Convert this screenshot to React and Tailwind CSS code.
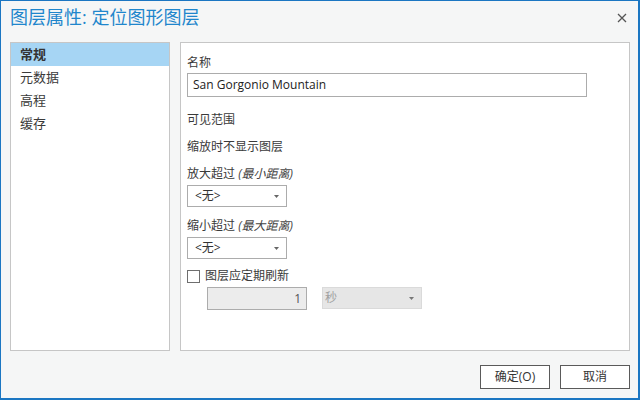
import { useState } from "react";

const font = { fontFamily: '"Open Sans", "Noto Sans CJK SC", sans-serif' };

const tabs = ["常规", "元数据", "高程", "缓存"];

function Caret({ className }) {
    return (
        <svg width="5" height="3" viewBox="0 0 5 3" className={className}>
            <path d="M0 0h5L2.5 3z" fill="currentColor" />
        </svg>
    );
}

function Dropdown({ value }) {
    return (
        <div className="w-[100px] h-[22px] border border-[#acacac] bg-white flex items-center justify-between pl-[7px] pr-[7px] text-[#333]">
            <span className="leading-none">{value}</span>
            <Caret className="text-[#666]" />
        </div>
    );
}

export default function App() {
    const [active] = useState(0);

    return (
        <div
            className="w-[640px] h-[400px] bg-[#f5f6f6] border border-[#1b76c2] border-r-2 border-b-2 flex flex-col text-[12px] text-[#3a3a3a]"
            style={font}
        >
            {/* Header */}
            <div className="h-[41px] flex items-start justify-between pl-[9px] pr-[11px]">
                <div className="text-[18px] text-[#1f86cc] mt-[4px] leading-[24px]">图层属性: 定位图形图层</div>
                <svg width="10" height="10" viewBox="0 0 10 10" className="mt-[12px] text-[#555]">
                    <path d="M1 1l8 8M9 1l-8 8" stroke="currentColor" strokeWidth="1.3" />
                </svg>
            </div>

            {/* Body */}
            <div className="flex gap-[10px] pl-[9px] h-[309px]">
                {/* Tab list */}
                <div className="w-[160px] h-full bg-white border border-[#c6c6c6] flex flex-col">
                    {tabs.map((t, i) => (
                        <div
                            key={t}
                            className={
                                "h-[23px] flex items-center pl-[9px] text-[13px] " +
                                (i === active ? "bg-[#a6d5f4] font-bold text-[#333]" : "text-[#3a3a3a]")
                            }
                        >
                            {t}
                        </div>
                    ))}
                </div>

                {/* Panel */}
                <div className="w-[450px] h-full bg-white border border-[#c6c6c6] pl-[6px] pt-[12px] flex flex-col">
                    <div className="leading-[16px]">名称</div>
                    <div className="mt-[2px] w-[400px] h-[24px] border border-[#acacac] flex items-center pl-[5px] text-[#222]">
                        San Gorgonio Mountain
                    </div>

                    <div className="mt-[15px] leading-[16px]">可见范围</div>
                    <div className="mt-[11px] leading-[16px]">缩放时不显示图层</div>

                    <div className="mt-[11px] leading-[16px]">
                        放大超过 <span className="italic text-[#444]">(最小距离)</span>
                    </div>
                    <div className="mt-[3px]">
                        <Dropdown value="<无>" />
                    </div>

                    <div className="mt-[11px] leading-[16px]">
                        缩小超过 <span className="italic text-[#444]">(最大距离)</span>
                    </div>
                    <div className="mt-[3px]">
                        <Dropdown value="<无>" />
                    </div>

                    <div className="mt-[9px] h-[16px] flex items-center gap-[5px]">
                        <div className="w-[13px] h-[13px] border border-[#6e6e6e] bg-white" />
                        <span className="leading-[16px]">图层应定期刷新</span>
                    </div>

                    <div className="mt-[3px] ml-[20px] flex items-start gap-[15px]">
                        <div className="w-[100px] h-[23px] border border-[#acacac] bg-[#ececec] flex items-center justify-end pr-[5px] text-[#555]">
                            1
                        </div>
                        <div className="w-[100px] h-[22px] bg-[#e6e6e6] border border-[#dadada] flex items-center justify-between pl-[2px] pr-[7px] text-[#a0a0a0]">
                            <span>秒</span>
                            <Caret className="text-[#777]" />
                        </div>
                    </div>
                </div>
            </div>

            {/* Footer */}
            <div className="flex justify-end gap-[10px] pr-[8px] mt-[14px]">
                <button className="w-[70px] h-[24px] border border-[#5a5a5a] bg-white text-[#333] text-[12px]">
                    确定(O)
                </button>
                <button className="w-[70px] h-[24px] border border-[#5a5a5a] bg-white text-[#333] text-[12px]">
                    取消
                </button>
            </div>
        </div>
    );
}
